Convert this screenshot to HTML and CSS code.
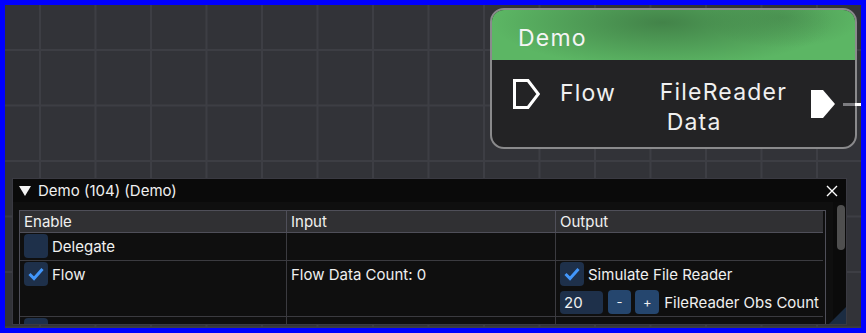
FILE: index.html
```html
<!DOCTYPE html>
<html lang="en">
<head>
    <meta charset="UTF-8">
    <meta name="viewport" content="width=device-width, initial-scale=1.0">
    <title>Node Editor</title>
    <link rel="stylesheet" href="styles.css">
</head>
<body>
    <div class="canvas">
        <div class="node">
            <div class="node-head">Demo</div>
            <div class="node-body">
                <div class="pin-in">
                    <svg class="pin" width="27" height="30" viewBox="0 0 27 30">
                        <path d="M1.5 1.5 H15 L25.3 15 L15 28.5 H1.5 Z" fill="none" stroke="#fff" stroke-width="3" stroke-linejoin="miter"/>
                    </svg>
                    <span class="pin-name">Flow</span>
                </div>
                <div class="pin-out">
                    <span class="pin-name out-name">FileReader<span class="second">Data</span></span>
                    <svg class="pin" width="24" height="28" viewBox="0 0 24 28">
                        <path d="M0 0 H12 L24 14 L12 28 H0 Z" fill="#fff"/>
                    </svg>
                </div>
            </div>
        </div>
        <div class="link"></div>

        <div class="panel">
            <div class="panel-title">
                <span class="arrow"></span>
                <span class="title-text">Demo (104) (Demo)</span>
                <svg class="close" width="12" height="12" viewBox="0 0 12 12">
                    <path d="M1 1 L11 11 M11 1 L1 11" stroke="#fff" stroke-width="1.4"/>
                </svg>
            </div>
            <div class="panel-content">
                <div class="table-wrap">
                    <div class="table">
                        <div class="cell head">Enable</div>
                        <div class="cell head">Input</div>
                        <div class="cell head">Output</div>

                        <div class="cell row-a">
                            <div class="line"><span class="checkbox"></span>Delegate</div>
                        </div>
                        <div class="cell row-a"></div>
                        <div class="cell row-a"></div>

                        <div class="cell row-b">
                            <div class="line"><span class="checkbox checked"><svg width="16" height="14" viewBox="0 0 16 14"><path d="M1.5 7 L6 11.5 L14.5 2" fill="none" stroke="#4296fa" stroke-width="3"/></svg></span>Flow</div>
                        </div>
                        <div class="cell row-b">
                            <div class="line">Flow Data Count: 0</div>
                        </div>
                        <div class="cell row-b">
                            <div class="line"><span class="checkbox checked"><svg width="16" height="14" viewBox="0 0 16 14"><path d="M1.5 7 L6 11.5 L14.5 2" fill="none" stroke="#4296fa" stroke-width="3"/></svg></span>Simulate File Reader</div>
                            <div class="line">
                                <span class="num-input">20</span>
                                <span class="step">-</span>
                                <span class="step">+</span>
                                <span class="step-label">FileReader Obs Count</span>
                            </div>
                        </div>

                        <div class="cell row-c">
                            <div class="line"><span class="checkbox"></span></div>
                        </div>
                        <div class="cell row-c"></div>
                        <div class="cell row-c"></div>
                    </div>
                </div>
                <div class="scrollbar">
                    <div class="thumb"></div>
                </div>
            </div>
            <div class="grip"></div>
        </div>
    </div>
</body>
</html>
```
FILE: styles.css
```css
body {
    margin: 0;
    font-family: 'Inter', 'Noto Sans', sans-serif;
    color: #f0f0f0;
}

.canvas {
    position: relative;
    width: 866px;
    height: 333px;
    box-sizing: border-box;
    border: 5px solid #0000ff;
    overflow: hidden;
    background-color: #323338;
    background-image:
        linear-gradient(to right, #3d3e44 2px, transparent 2px),
        linear-gradient(to bottom, #3d3e44 2px, transparent 2px);
    background-size: 55.5px 55.5px;
    background-position: 34px 44px;
}

/* node */

.node {
    position: absolute;
    left: 485px;
    top: 3px;
    width: 367px;
    height: 141px;
    box-sizing: border-box;
    border: 2px solid #8a8a8c;
    border-radius: 14px;
    background-color: #232325;
    overflow: hidden;
    font-size: 23px;
    letter-spacing: 1.2px;
}

.node-head {
    height: 50px;
    box-sizing: border-box;
    padding: 13px 0 0 26px;
    line-height: 30px;
    color: #f4f4f4;
    background-color: #5cb664;
    background-image:
        radial-gradient(ellipse 170px 45px at 47% 25%, rgba(62, 122, 68, 0.85), rgba(62, 122, 68, 0)),
        radial-gradient(ellipse 80px 30px at 80% 15%, rgba(70, 135, 76, 0.6), rgba(70, 135, 76, 0));
}

.node-body {
    display: flex;
    justify-content: space-between;
    padding: 0 20px 0 21px;
}

.pin-in {
    display: flex;
    align-items: flex-start;
    gap: 20px;
    padding-top: 19px;
}

.pin-in .pin-name {
    margin-top: -1px;
}

.pin-name {
    line-height: 30px;
    white-space: nowrap;
}

.pin-out {
    display: flex;
    align-items: flex-start;
    gap: 24px;
    padding-top: 17px;
}

.second {
    display: block;
    padding-left: 7px;
}

.pin-out .pin {
    margin-top: 13px;
}

.link {
    position: absolute;
    left: 838px;
    top: 98px;
    width: 18px;
    height: 3px;
    background: linear-gradient(to right, #7c7c80 12px, #ffffff 12px);
}

/* panel */

.panel {
    position: absolute;
    left: 7px;
    top: 173px;
    width: 835px;
    height: 147px;
    box-sizing: border-box;
    border: 1px solid #3a3a42;
    background-color: #0f0f0f;
    display: flex;
    flex-direction: column;
    overflow: hidden;
    font-size: 15px;
    white-space: nowrap;
}

.panel-title {
    height: 23px;
    flex-shrink: 0;
    display: flex;
    align-items: center;
    background-color: #0a0a0a;
    padding-left: 6px;
}

.arrow {
    width: 0;
    height: 0;
    border-left: 6px solid transparent;
    border-right: 6px solid transparent;
    border-top: 10px solid #f4f4f4;
    margin-right: 7px;
}

.title-text {
    flex: 1;
}

.close {
    margin-right: 8px;
}

.panel-content {
    flex: 1;
    display: flex;
    min-height: 0;
}

.table-wrap {
    padding: 8px 7px 0 6px;
}

.table {
    display: grid;
    grid-template-columns: 267px 269px 267px;
    width: 805px;
    border: 1px solid #4f4f59;
    border-bottom: none;
}

.cell {
    box-sizing: border-box;
    border-right: 1px solid #3b3b40;
    border-bottom: 1px solid #3b3b40;
    padding: 1px 4px 2px;
}

.cell:nth-child(3n) {
    border-right: none;
}

.head {
    height: 22px;
    padding: 0 4px;
    line-height: 21px;
    background-color: #303033;
    border-color: #4f4f59;
}

.row-a {
    height: 28px;
}

.row-b {
    height: 56px;
}

.row-c {
    height: 28px;
}

.line {
    display: flex;
    align-items: center;
    height: 24px;
    gap: 4px;
}

.line + .line {
    margin-top: 4px;
}

.checkbox {
    width: 24px;
    height: 24px;
    border-radius: 4px;
    background-color: #1e304a;
    display: flex;
    align-items: center;
    justify-content: center;
}

.num-input {
    width: 43px;
    height: 23px;
    box-sizing: border-box;
    padding-left: 4px;
    line-height: 23px;
    border-radius: 4px;
    background-color: #1e304a;
    margin-right: 1px;
}

.step {
    width: 24px;
    height: 24px;
    border-radius: 4px;
    background-color: #25466e;
    display: flex;
    align-items: center;
    justify-content: center;
    font-size: 13px;
}

.step-label {
    margin-left: 1px;
}

.scrollbar {
    width: 14px;
    background-color: #0b0b0b;
    padding: 3px 2px 0 4px;
    box-sizing: border-box;
}

.thumb {
    width: 8px;
    height: 45px;
    border-radius: 4px;
    background-color: #4f4f4f;
}

.grip {
    position: absolute;
    right: 0;
    bottom: 0;
    width: 17px;
    height: 17px;
    background-color: #1b2c42;
    clip-path: polygon(100% 0, 100% 100%, 0 100%);
}
```
